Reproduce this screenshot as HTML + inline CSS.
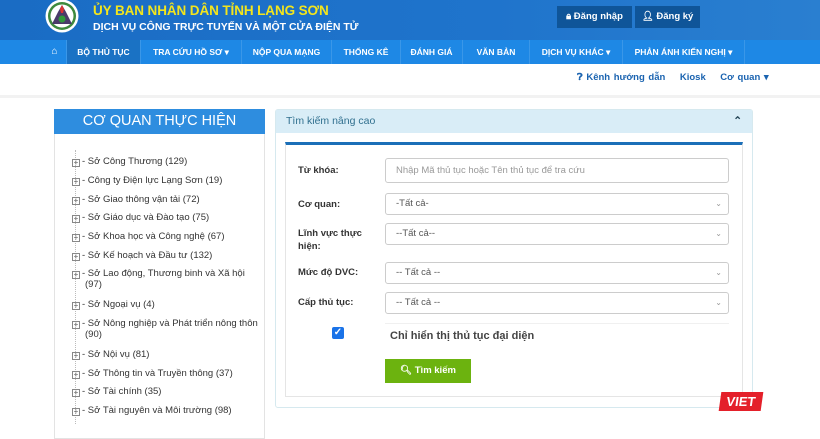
<!DOCTYPE html>
<html><head><meta charset="utf-8"><style>
*{box-sizing:border-box;margin:0;padding:0}
body{width:820px;height:424px;overflow:hidden;background:#fff;font-family:"Liberation Sans",Arial,sans-serif;position:relative}
.a{position:absolute}
.hdr{left:0;top:0;width:820px;height:40px;background:linear-gradient(90deg,#1a6cc4,#1f74cc 60%,#2a7fd0)}
.nav{left:0;top:40px;width:820px;height:24px;background:#1e88e5}
.ni{position:absolute;top:40px;height:24px;line-height:24px;color:#fff;font-size:8.5px;font-weight:bold;text-align:center;border-right:1px solid #3a97e8}
.btn{top:6px;height:22px;background:#0f5599;color:#fff;font-size:9.5px;font-weight:bold;line-height:22px;text-align:center}
.tr{position:absolute;left:72px;font-size:9.5px;color:#333}
.tr i{font-style:normal;display:inline-block;width:8px;height:8px;border:1px solid #888;font-size:8px;line-height:5px;text-align:center;color:#666;margin-right:2px;vertical-align:-1px}
.lbl{position:absolute;left:298px;font-size:9.5px;font-weight:bold;color:#333}
.inp{position:absolute;left:385px;width:344px;border:1px solid #ccc;border-radius:3px;font-size:9.5px;color:#555;padding-left:10px}
.inp b{position:absolute;right:6px;font-weight:normal;color:#999;font-size:8px}
</style></head><body>
<div class="a hdr"></div>
<svg class="a" style="left:44px;top:0" width="36" height="34"><circle cx="18" cy="16" r="16.5" fill="#fff"/><circle cx="18" cy="16" r="14" fill="#3e8a3e"/><circle cx="18" cy="16" r="11.5" fill="#fff"/><path d="M8 24 L14 12 L18 5 L22 12 L28 24Z" fill="#4a3a6a"/><path d="M16 9 L18 5 L20 9 L19 13 L17 13Z" fill="#d33"/><circle cx="18" cy="19" r="3.5" fill="#2f9a3a"/></svg>
<div class="a" style="left:93px;top:3px;color:#f3e51c;font-size:13.5px;font-weight:bold;letter-spacing:-.1px">ỦY BAN NHÂN DÂN TỈNH LẠNG SƠN</div>
<div class="a" style="left:93px;top:21px;color:#fff;font-size:10.5px;font-weight:bold">DỊCH VỤ CÔNG TRỰC TUYẾN VÀ MỘT CỬA ĐIỆN TỬ</div>
<div class="a btn" style="left:557px;width:75px">🔒︎ Đăng nhập</div>
<div class="a btn" style="left:635px;width:65px">👤︎ Đăng ký</div>
<div class="a nav"></div>
<div class="ni" style="left:43px;width:24px;font-size:10px">⌂</div>
<div class="ni" style="left:67px;width:74px;background:#1a72c4">BỘ THỦ TỤC</div>
<div class="ni" style="left:141px;width:101px">TRA CỨU HỒ SƠ ▾</div>
<div class="ni" style="left:242px;width:90px">NỘP QUA MẠNG</div>
<div class="ni" style="left:332px;width:69px">THỐNG KÊ</div>
<div class="ni" style="left:401px;width:62px">ĐÁNH GIÁ</div>
<div class="ni" style="left:463px;width:67px">VĂN BẢN</div>
<div class="ni" style="left:530px;width:93px">DỊCH VỤ KHÁC ▾</div>
<div class="ni" style="left:623px;width:122px">PHẢN ÁNH KIẾN NGHỊ ▾</div>
<div class="a" style="left:577px;top:72px;font-size:9.5px;font-weight:bold;color:#1a63b0;word-spacing:1px">❓︎ Kênh hướng dẫn &nbsp;&nbsp; Kiosk &nbsp;&nbsp; Cơ quan ▾</div>
<div class="a" style="left:0;top:95px;width:820px;height:3px;background:#f2f2f2"></div>
<div class="a" style="left:54px;top:109px;width:211px;height:330px;border:1px solid #e3e3e3"></div>
<div class="a" style="left:54px;top:109px;width:211px;height:25px;background:#2e8ddf;color:#fff;font-size:14.5px;text-align:center;line-height:25px">CƠ QUAN THỰC HIỆN</div>
<div class="a" style="left:75px;top:150px;width:0;height:274px;border-left:1px dotted #bbb"></div>
<div class="tr" style="top:156px"><i>+</i>- Sở Công Thương (129)</div>
<div class="tr" style="top:175px"><i>+</i>- Công ty Điện lực Lạng Sơn (19)</div>
<div class="tr" style="top:194px"><i>+</i>- Sở Giao thông vận tải (72)</div>
<div class="tr" style="top:212px"><i>+</i>- Sở Giáo dục và Đào tạo (75)</div>
<div class="tr" style="top:231px"><i>+</i>- Sở Khoa học và Công nghệ (67)</div>
<div class="tr" style="top:250px"><i>+</i>- Sở Kế hoạch và Đầu tư (132)</div>
<div class="tr" style="top:268px"><i>+</i>- Sở Lao động, Thương binh và Xã hội<br><span style="padding-left:13px">(97)</span></div>
<div class="tr" style="top:299px"><i>+</i>- Sở Ngoại vụ (4)</div>
<div class="tr" style="top:318px"><i>+</i>- Sở Nông nghiệp và Phát triển nông thôn<br><span style="padding-left:13px">(90)</span></div>
<div class="tr" style="top:349px"><i>+</i>- Sở Nội vụ (81)</div>
<div class="tr" style="top:368px"><i>+</i>- Sở Thông tin và Truyền thông (37)</div>
<div class="tr" style="top:386px"><i>+</i>- Sở Tài chính (35)</div>
<div class="tr" style="top:405px"><i>+</i>- Sở Tài nguyên và Môi trường (98)</div>
<div class="a" style="left:275px;top:109px;width:478px;height:299px;border:1px solid #d6e9ef;border-radius:3px"></div>
<div class="a" style="left:276px;top:110px;width:476px;height:23px;background:#d9edf7;color:#31708f;font-size:10.5px;line-height:23px;padding-left:10px">Tìm kiếm nâng cao<span style="position:absolute;right:10px;font-weight:bold;color:#245">⌃</span></div>
<div class="a" style="left:285px;top:142px;width:458px;height:255px;border:1px solid #e5e5e5;border-top:3px solid #1b6fb8"></div>
<div class="lbl" style="top:165px">Từ khóa:</div>
<div class="inp" style="top:158px;height:25px;line-height:23px;color:#999">Nhập Mã thủ tục hoặc Tên thủ tục để tra cứu</div>
<div class="lbl" style="top:199px">Cơ quan:</div>
<div class="inp" style="top:193px;height:22px;line-height:20px">-Tất cả-<b>⌄</b></div>
<div class="lbl" style="top:227px;line-height:13px">Lĩnh vực thực<br>hiện:</div>
<div class="inp" style="top:223px;height:22px;line-height:20px">--Tất cả--<b>⌄</b></div>
<div class="lbl" style="top:267px">Mức độ DVC:</div>
<div class="inp" style="top:262px;height:22px;line-height:20px">-- Tất cả --<b>⌄</b></div>
<div class="lbl" style="top:297px">Cấp thủ tục:</div>
<div class="inp" style="top:292px;height:22px;line-height:20px">-- Tất cả --<b>⌄</b></div>
<div class="a" style="left:385px;top:323px;width:344px;height:27px;border-top:1px solid #f0f0f0"></div>
<div class="a" style="left:332px;top:327px;width:12px;height:12px;background:#1a73e8;border-radius:2px;color:#fff;font-size:10px;line-height:12px;text-align:center;font-weight:bold">✓</div>
<div class="a" style="left:390px;top:330px;font-size:11px;font-weight:bold;color:#444">Chỉ hiển thị thủ tục đại diện</div>
<div class="a" style="left:385px;top:359px;width:86px;height:24px;background:#6cb30f;color:#fff;font-size:9.5px;font-weight:bold;text-align:center;line-height:24px">🔍︎ Tìm kiếm</div>
<div class="a" style="left:720px;top:392px;width:42px;height:19px;background:#e4202a;color:#fff;font-weight:bold;font-size:13px;line-height:19px;text-align:center;transform:skewX(-8deg)">VIET</div>
</body></html>
